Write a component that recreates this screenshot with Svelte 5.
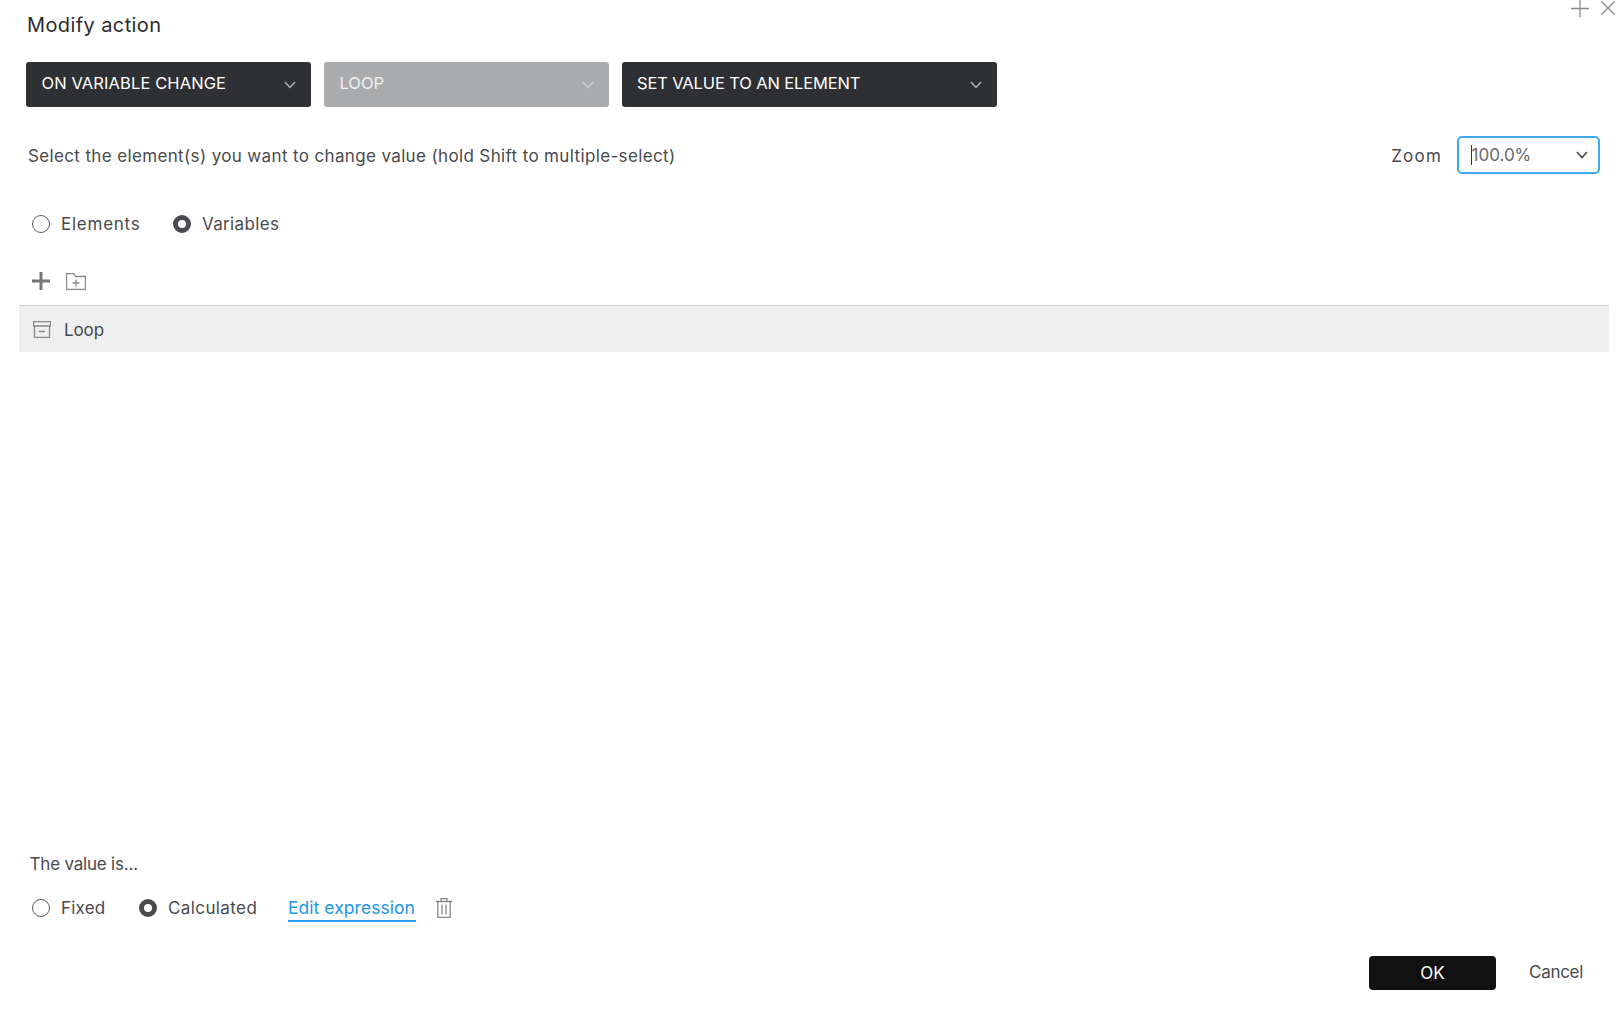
<script>
  const selects = [
    { label: 'ON VARIABLE CHANGE', width: 285, disabled: false },
    { label: 'LOOP', width: 285, disabled: true },
    { label: 'SET VALUE TO AN ELEMENT', width: 375, disabled: false }
  ];
</script>

<div class="dialog">
  <div class="window-icons">
    <svg width="18" height="18" viewBox="0 0 18 18"><path d="M9 0v17M0 8.5h18" /></svg>
    <svg width="16" height="16" viewBox="0 0 16 16"><path d="M1.5 1.5l13 13M14.5 1.5l-13 13" /></svg>
  </div>

  <h1 class="title">Modify action</h1>

  <div class="selects">
    {#each selects as s}
      <div class="select" class:disabled={s.disabled} style="width:{s.width}px">
        <span>{s.label}</span>
        <svg width="12" height="8" viewBox="0 0 12 8"><path d="M1 1l5 5.500 5-5.500" /></svg>
      </div>
    {/each}
  </div>

  <div class="instruction">
    <span class="text">Select the element(s) you want to change value (hold Shift to multiple-select)</span>
    <div class="zoom">
      <span class="zoom-label">Zoom</span>
      <div class="zoom-box">
        <span class="caret"></span><span class="zoom-value">100.0%</span>
        <svg width="12" height="8" viewBox="0 0 12 8"><path d="M1 1l5 5.500 5-5.500" /></svg>
      </div>
    </div>
  </div>

  <div class="radios top-radios">
    <label class="radio"><span class="dot"></span><span class="radio-text elements">Elements</span></label>
    <label class="radio"><span class="dot on"></span><span class="radio-text variables">Variables</span></label>
  </div>

  <div class="toolbar">
    <svg width="20" height="20" viewBox="0 0 20 20"><path class="thick" d="M10 1v18M1 10h18" /></svg>
    <svg width="20" height="17" viewBox="0 0 20 17"><path class="thin" d="M.5 16.500V.5h7l2 3h10v13zM10 6.500v7M6.500 10h7" /></svg>
  </div>

  <div class="tree">
    <div class="row">
      <svg width="18" height="17" viewBox="0 0 18 17"><path class="thin" d="M.5.5h17v4.500H.5zM1.500 5v11.500h15V5M6 10.500h6" /></svg>
      <span class="row-text">Loop</span>
    </div>
  </div>

  <div class="spacer"></div>

  <div class="value-label">The value is...</div>

  <div class="radios value-radios">
    <label class="radio"><span class="dot"></span><span class="radio-text fixed">Fixed</span></label>
    <label class="radio"><span class="dot on"></span><span class="radio-text calc">Calculated</span></label>
    <a class="link" href="#edit">Edit expression</a>
    <svg class="trash" width="16" height="20" viewBox="0 0 16 20"><path class="thin" d="M0 3.500h16M5 3.500V.5h6v3M1.800 3.500v16h12.400v-16M6 6.500v10M10 6.500v10" /></svg>
  </div>

  <div class="actions">
    <button class="ok">OK</button>
    <span class="cancel">Cancel</span>
  </div>
</div>

<style>
  :global(body) { margin: 0; background: #fff; }

  .dialog {
    position: relative;
    box-sizing: border-box;
    width: 1624px;
    height: 1013px;
    display: flex;
    flex-direction: column;
    font-family: Inter, "Open Sans", sans-serif;
    color: #4a4a4e;
    overflow: hidden;
  }

  .window-icons {
    position: absolute;
    top: 0;
    right: 8px;
    display: flex;
    gap: 11px;
  }
  .window-icons svg { display: block; }
  .window-icons path { fill: none; stroke: #8a8a8c; stroke-width: 1.3; }

  .title {
    margin: 0;
    padding: 13px 0 0 27px;
    height: 49px;
    box-sizing: border-box;
    font-size: 20px;
    line-height: 24px;
    font-weight: 400;
    letter-spacing: 0.4px;
    color: #2b2b2e;
  }

  .selects { display: flex; gap: 13px; margin: 13px 0 0 26px; height: 45px; }
  .select {
    box-sizing: border-box;
    display: flex;
    align-items: center;
    justify-content: space-between;
    padding: 0 15px 0 15px;
    background: #2f3033;
    color: #fff;
    border-radius: 3px;
    font-size: 16.500px;
  }
  .select:first-child { letter-spacing: 0.1px; padding-left: 15.500px; }
  .select:last-child { letter-spacing: -0.14px; }
  .select span { position: relative; top: -2px; }
  .select svg path { fill: none; stroke: #b5b5b7; stroke-width: 1.4; }
  .select.disabled { background: #aaabad; color: #f2f2f2; padding-left: 15.500px; }
  .select.disabled svg path { stroke: #d0d0d2; }

  .instruction {
    display: flex;
    align-items: center;
    justify-content: space-between;
    margin-top: 29px;
    padding: 0 24px 0 28px;
    height: 38px;
  }
  .text { font-size: 17px; letter-spacing: 0.36px; position: relative; top: 1px; }

  .zoom { display: flex; align-items: center; gap: 14.500px; }
  .zoom-label { font-size: 17px; letter-spacing: 1.2px; position: relative; top: 1px; }
  .zoom-box {
    box-sizing: border-box;
    width: 143.500px;
    height: 38px;
    border: 2px solid #3fa9ec;
    border-radius: 5px;
    display: flex;
    align-items: center;
    padding: 0 10px 0 12px;
    font-size: 17px;
    color: #6a6a6e;
  }
  .caret { width: 1px; height: 20px; background: #333; margin-right: 0; }
  .zoom-value { flex: 1; }
  .zoom-box svg path { fill: none; stroke: #444; stroke-width: 1.600; }

  .radios { display: flex; align-items: center; padding-left: 32px; }
  .top-radios { margin-top: 41px; height: 18px; gap: 32.500px; }
  .value-radios { margin-top: 22px; height: 24px; }

  .radio { display: flex; align-items: center; gap: 11px; }
  .dot {
    box-sizing: border-box;
    width: 18px;
    height: 18px;
    border-radius: 50%;
    border: 1.500px solid #5c5c60;
    background: #fff;
  }
  .dot.on { border: 5px solid #4a4a4f; }
  .radio-text { font-size: 17px; line-height: 18px; }
  .elements { letter-spacing: 0.75px; }
  .variables { letter-spacing: 0.35px; }
  .fixed { width: 44px; margin-right: 34px; letter-spacing: 0.2px; }
  .calc { width: 90px; margin-right: 30px; letter-spacing: 0.4px; }

  .toolbar { display: flex; align-items: center; gap: 15px; margin-top: 38px; padding-left: 31px; height: 20px; }
  .thick { fill: none; stroke: #77777a; stroke-width: 3; }
  .thin { fill: none; stroke: #88888a; stroke-width: 1.300; }

  .tree { margin: 14px 15px 0 19px; border-top: 1px solid #d0d0d0; }
  .row {
    height: 46px;
    background: #efefef;
    display: flex;
    align-items: center;
    gap: 13px;
    padding-left: 14px;
  }
  .row-text { font-size: 17px; color: #47474f; letter-spacing: -0.1px; position: relative; top: 1px; }

  .spacer { flex: 1; }

  .value-label { padding-left: 29.500px; font-size: 17px; line-height: 20px; letter-spacing: -0.2px; }

  .link {
    color: #2296e6;
    text-decoration: none;
    font-size: 17.500px;
    line-height: 24px;
    height: 26px;
    box-sizing: border-box;
    border-bottom: 2px solid #2a9ff0;
    width: 128px;
    letter-spacing: 0.05px;
    white-space: nowrap;
    position: relative;
    top: 1px;
  }
  .trash { margin-left: 20px; }

  .actions {
    display: flex;
    align-items: center;
    margin-top: 36px;
    margin-bottom: 23px;
    padding-right: 41px;
    justify-content: flex-end;
    height: 34px;
    gap: 33px;
  }
  .ok {
    width: 127px;
    height: 34px;
    background: #111;
    color: #fff;
    border: 0;
    border-radius: 4px;
    font-family: inherit;
    font-size: 17px;
  }
  .cancel { font-size: 17px; letter-spacing: -0.3px; position: relative; top: -1px; }
</style>
